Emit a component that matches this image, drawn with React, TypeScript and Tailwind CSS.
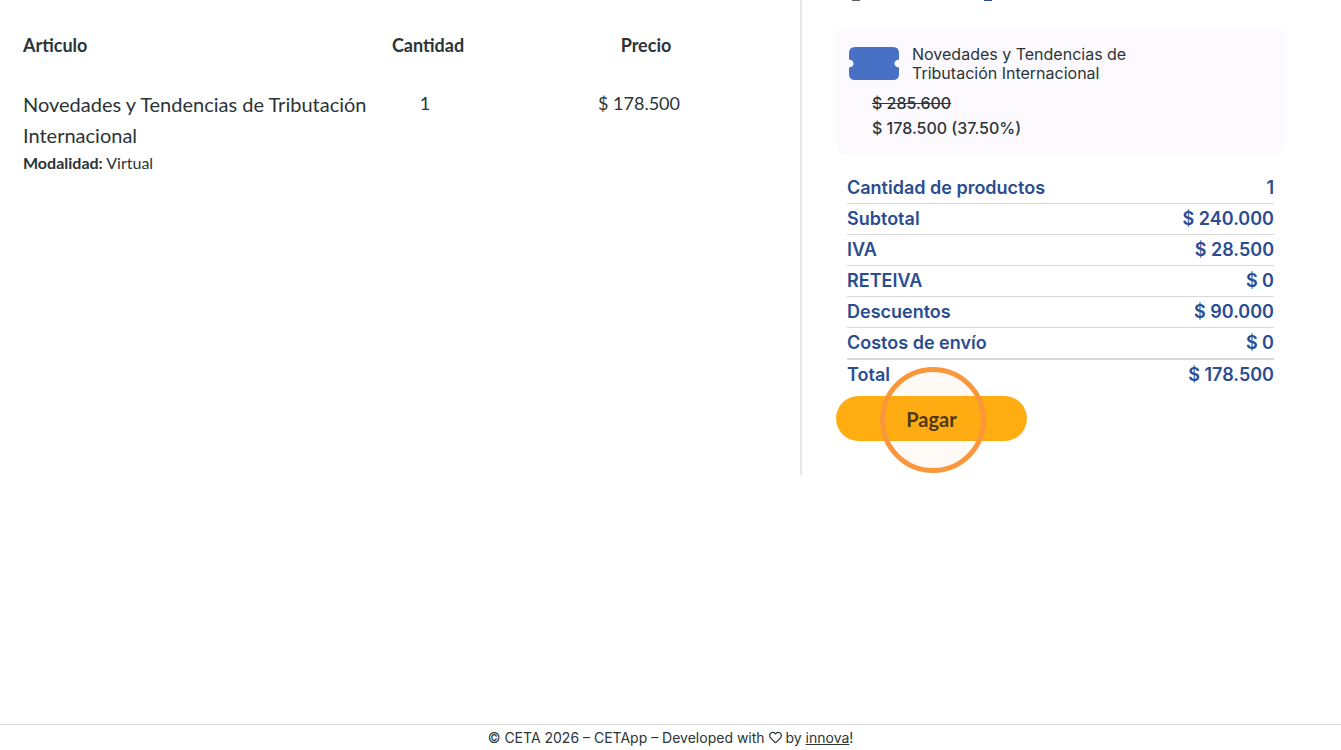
import { FaRegHeart } from "react-icons/fa";

type Articulo = {
  nombre: string;
  modalidad: string;
  cantidad: number;
  precio: string;
  precioAnterior: string;
  descuento: string;
};

const articulos: Array<Articulo> = [
  {
    nombre: "Novedades y Tendencias de Tributación Internacional",
    modalidad: "Virtual",
    cantidad: 1,
    precio: "$ 178.500",
    precioAnterior: "$ 285.600",
    descuento: "37.50%",
  },
];

const resumen = [
  { label: "Cantidad de productos", valor: "1" },
  { label: "Subtotal", valor: "$ 240.000" },
  { label: "IVA", valor: "$ 28.500" },
  { label: "RETEIVA", valor: "$ 0" },
  { label: "Descuentos", valor: "$ 90.000" },
  { label: "Costos de envío", valor: "$ 0" },
];

const TablaArticulos = () => (
  <table className="w-full table-fixed text-[#2b3437] font-['Lato',sans-serif]">
    <thead>
      <tr className="text-lg leading-6">
        <th className="w-[46%] pt-[33px] pb-8 pl-[23px] text-left font-bold">Articulo</th>
        <th className="w-[15%] pt-[33px] pb-8 text-center font-bold">Cantidad</th>
        <th className="w-[39%] pt-[33px] pb-8 pl-1 text-center font-bold">Precio</th>
      </tr>
    </thead>
    <tbody>
      {articulos.map((articulo) => (
        <tr key={articulo.nombre} className="align-top">
          <td className="pl-[23px]">
            <p className="text-xl leading-[31px]">{articulo.nombre}</p>
            <p className="text-base leading-6">
              <b>Modalidad:</b> {articulo.modalidad}
            </p>
          </td>
          <td className="pr-1.5 text-center text-lg leading-7">{articulo.cantidad}</td>
          <td className="pr-2.5 text-center text-lg leading-7">{articulo.precio}</td>
        </tr>
      ))}
    </tbody>
  </table>
);

const TicketIcon = () => (
  <svg className="h-[33px] w-[50px] shrink-0" viewBox="0 0 50 33" fill="#4870c4" aria-hidden="true">
    <path d="M6 0H44Q50 0 50 6V12.5Q45.5 13 45.5 16.5Q45.5 20 50 20.5V27Q50 33 44 33H6Q0 33 0 27V20.5Q4.5 20 4.5 16.5Q4.5 13 0 12.5V6Q0 0 6 0Z" />
  </svg>
);

const Resumen = () => (
  <aside className="border-l-2 border-[#e6e6e8] pr-14 pb-[34px] pl-[34px]">
    {/* lower edge of the heading that is scrolled out of view */}
    <div className="flex h-px gap-[124px] pl-4" aria-hidden="true">
      <span className="w-2 bg-[#5a5f66]" />
      <span className="w-2 bg-[#2a4d91]" />
    </div>

    {articulos.map((articulo) => (
      <div key={articulo.nombre} className="mt-[27px] rounded-lg bg-[#fcfaff] px-[13px] pt-[17px] pb-[13px] text-base text-[#2b3437]">
        <div className="flex items-start gap-[13px] pt-0.5">
          <TicketIcon />
          <p className="-mt-0.5 max-w-60 leading-[19px]">{articulo.nombre}</p>
        </div>
        <div className="mt-2 pl-[23px] leading-[25px] font-medium">
          <p className="line-through">{articulo.precioAnterior}</p>
          <p>
            {articulo.precio} ({articulo.descuento})
          </p>
        </div>
      </div>
    ))}

    <table className="mt-[19px] mr-3 ml-[11px] w-[calc(100%-22px)] text-lg leading-[30px] font-semibold text-[#2a4d91]">
      <tbody>
        {resumen.map((fila) => (
          <tr key={fila.label} className="border-b border-[#d8d8d8] last:border-b-2">
            <th scope="row" className="text-left font-semibold">{fila.label}</th>
            <td className="text-right">{fila.valor}</td>
          </tr>
        ))}
      </tbody>
      <tfoot>
        <tr>
          <th scope="row" className="text-left font-semibold">Total</th>
          <td className="text-right">$ 178.500</td>
        </tr>
      </tfoot>
    </table>

    <div className="relative mt-[6px] w-[191px]">
      <button type="button" className="h-[45px] w-full rounded-full bg-[#ffad10] font-['Lato',sans-serif] text-xl font-bold text-[#453315]">
        Pagar
      </button>
      {/* click marker */}
      <span className="pointer-events-none absolute -top-[29px] left-11 size-[106px] rounded-full border-[5px] border-[#fa963c] bg-[#fa963c]/5" />
    </div>
  </aside>
);

const App = () => {
  return (
    <div className="flex min-h-screen flex-col bg-white font-['Inter',sans-serif]">
      <main className="grid grow grid-cols-[800fr_541fr] items-start">
        <TablaArticulos />
        <Resumen />
      </main>
      <footer className="border-t border-[#d6d6d6] pt-0.5 pb-0.5 text-center text-sm leading-[21px] text-[#2b3437]">
        © CETA 2026 – CETApp – Developed with <FaRegHeart className="inline size-[13px] align-[-1px]" /> by{" "}
        <a href="#innova" className="underline">innova</a>!
      </footer>
    </div>
  );
};

export default App;
